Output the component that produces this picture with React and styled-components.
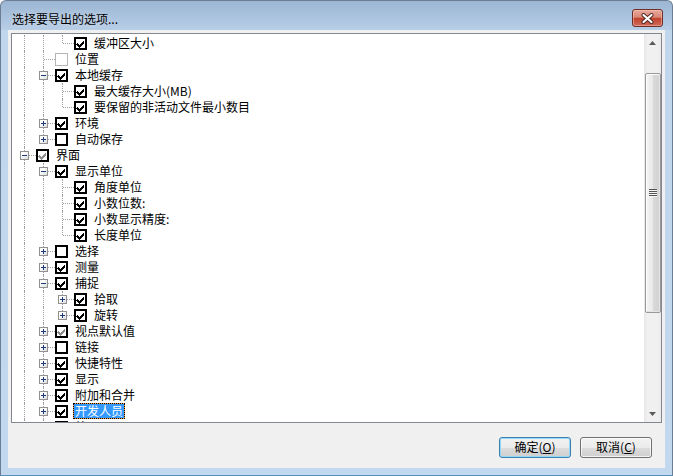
import styled, { createGlobalStyle } from "styled-components";

const GlobalStyle = createGlobalStyle`
  html, body {
    margin: 0;
    padding: 0;
    overflow: hidden;
    background: #fff;
  }
  body {
    font-family: "Noto Sans CJK SC", "Liberation Sans", sans-serif;
  }
`;

const FONT = `"Noto Sans CJK SC", "Liberation Sans", sans-serif`;
const LINE = "#a0a0a0";

const Window = styled.div`
  width: 673px;
  height: 476px;
  box-sizing: border-box;
  border: 1px solid #6a7d93;
  border-bottom-color: #4f93bd;
  border-radius: 6px 6px 0 0;
  background: linear-gradient(#9bb5d3 0, #b7cee7 29px, #bfd6ed 29px, #c2d8ee 100%);
  display: flex;
  flex-direction: column;
`;

const TitleBar = styled.div`
  height: 29px;
  flex: none;
  display: flex;
  align-items: flex-start;
  padding-left: 11px;
  padding-right: 9px;
`;

const Title = styled.div`
  flex: 1;
  font-family: ${FONT};
  font-size: 12px;
  line-height: 16px;
  margin-top: 10px;
  color: #000;
  text-shadow: 0 0 6px rgba(255, 255, 255, 0.6);
`;

const CloseButton = styled.div`
  width: 31px;
  height: 18px;
  margin-top: 8px;
  box-sizing: border-box;
  border: 1px solid #6e2d25;
  border-radius: 3px;
  background: linear-gradient(#e9aa9c 0%, #d98676 45%, #c2432e 52%, #cf6a57 100%);
  box-shadow: inset 0 0 0 1px rgba(255, 210, 200, 0.45);
  display: flex;
  align-items: center;
  justify-content: center;
`;

const Client = styled.div`
  flex: 1;
  margin: 0 7px 7px;
  background: #f0f0f0;
  padding: 3px 3px 0;
  display: flex;
  flex-direction: column;
`;

const Tree = styled.div`
  height: 390px;
  box-sizing: border-box;
  border: 1px solid #828790;
  background: #fff;
  display: flex;
  overflow: hidden;
`;

const TreeBody = styled.div`
  flex: 1;
  padding: 1px 0 0 3px;
  overflow: hidden;
`;

const Row = styled.div`
  height: 16px;
  display: flex;
  align-items: flex-start;
`;

const Guide = styled.div`
  width: 19px;
  height: 16px;
  flex: none;
  position: relative;
  &::before {
    content: "";
    display: ${p => (p.$line ? "block" : "none")};
    position: absolute;
    left: 9px;
    top: 0;
    height: 16px;
    border-left: 1px dotted ${LINE};
  }
`;

const Connector = styled.div`
  width: 19px;
  height: 16px;
  flex: none;
  position: relative;
  &::before {
    content: "";
    position: absolute;
    left: 9px;
    top: 0;
    height: ${p => (p.$last ? 8 : 16)}px;
    border-left: 1px dotted ${LINE};
  }
  &::after {
    content: "";
    position: absolute;
    left: 10px;
    top: 8px;
    width: 11px;
    border-top: 1px dotted ${LINE};
  }
`;

const Expander = styled.div`
  position: absolute;
  left: 5px;
  top: 4px;
  width: 9px;
  height: 9px;
  box-sizing: border-box;
  border: 1px solid #919191;
  background: linear-gradient(135deg, #ffffff 30%, #dcdcdc 100%);
  z-index: 1;
  &::before {
    content: "";
    position: absolute;
    left: 1px;
    top: 3px;
    width: 5px;
    height: 1px;
    background: #1f3a78;
  }
  &::after {
    content: "";
    display: ${p => (p.$open ? "none" : "block")};
    position: absolute;
    left: 3px;
    top: 1px;
    width: 1px;
    height: 5px;
    background: #1f3a78;
  }
`;

const CheckBox = styled.div`
  width: 13px;
  height: 13px;
  flex: none;
  box-sizing: border-box;
  margin: 2px 5px 0 2px;
  background: #fff;
  border: ${p => (p.$state === "disabled" ? "1px solid #b5b5b5" : "2px solid #000")};
  display: flex;
  align-items: center;
  justify-content: center;
`;

const Label = styled.div`
  height: 16px;
  box-sizing: border-box;
  padding: 0 1px;
  font-family: ${FONT};
  font-size: 12px;
  line-height: 14px;
  white-space: nowrap;
  color: ${p => (p.$selected ? "#fff" : "#000")};
  border: 1px ${p => (p.$selected ? "dotted #000" : "solid transparent")};
  background: ${p =>
    p.$selected ? "linear-gradient(#3399ff, #3399ff) padding-box, #f29a3c border-box" : "transparent"};
`;

const ScrollBar = styled.div`
  width: 17px;
  flex: none;
  display: flex;
  flex-direction: column;
  background: linear-gradient(to right, #e6e6e6, #f0f0f0 3px, #f0f0f0 14px, #eaeaea);
`;

const ArrowButton = styled.div`
  height: 17px;
  flex: none;
  display: flex;
  align-items: center;
  justify-content: center;
`;

const Track = styled.div`
  flex: 1;
  display: flex;
  flex-direction: column;
  align-items: center;
`;

const Thumb = styled.div`
  width: 16px;
  height: 240px;
  margin-top: 22px;
  box-sizing: border-box;
  border: 1px solid #989898;
  border-radius: 2px;
  background: linear-gradient(to right, #f4f4f4 0%, #e8e8e8 50%, #d9d9d9 50%, #d2d2d2 100%);
  box-shadow: inset 1px 1px 0 #fcfcfc, inset -1px -1px 0 #e4e4e4;
  display: flex;
  align-items: center;
  justify-content: center;
`;

const Grip = styled.div`
  width: 8px;
  height: 8px;
  background: repeating-linear-gradient(to bottom, #555 0 1px, #f5f5f5 1px 2px);
`;

const Footer = styled.div`
  display: flex;
  justify-content: flex-end;
  gap: 9px;
  padding: 14px 10px 0;
`;

const Button = styled.div`
  width: 72px;
  height: 21px;
  box-sizing: border-box;
  border: 1px solid ${p => (p.$default ? "#3c7fb1" : "#707070")};
  border-radius: 3px;
  background: linear-gradient(#f2f2f2 0%, #ebebeb 50%, #dddddd 50%, #cfcfcf 100%);
  box-shadow: inset 0 0 0 1px ${p => (p.$default ? "#96d8f7" : "rgba(255,255,255,0.75)")};
  font-family: ${FONT};
  font-size: 12px;
  line-height: 18px;
  color: #000;
  text-align: center;
  u {
    text-decoration: underline;
    text-underline-offset: 1px;
  }
`;

const rows = [
  { label: "缓冲区大小", guides: [1, 1], last: true, check: "on" },
  { label: "位置", guides: [1], check: "disabled" },
  { label: "本地缓存", guides: [1], toggle: "minus", check: "on" },
  { label: "最大缓存大小(MB)", guides: [1, 1], check: "on" },
  { label: "要保留的非活动文件最小数目", guides: [1, 1], last: true, check: "on" },
  { label: "环境", guides: [1], toggle: "plus", check: "on" },
  { label: "自动保存", guides: [1], last: true, toggle: "plus", check: "off" },
  { label: "界面", guides: [], toggle: "minus", check: "gray" },
  { label: "显示单位", guides: [1], toggle: "minus", check: "on" },
  { label: "角度单位", guides: [1, 1], check: "on" },
  { label: "小数位数:", guides: [1, 1], check: "on" },
  { label: "小数显示精度:", guides: [1, 1], check: "on" },
  { label: "长度单位", guides: [1, 1], last: true, check: "on" },
  { label: "选择", guides: [1], toggle: "plus", check: "off" },
  { label: "测量", guides: [1], toggle: "plus", check: "on" },
  { label: "捕捉", guides: [1], toggle: "minus", check: "on" },
  { label: "拾取", guides: [1, 1], toggle: "plus", check: "on" },
  { label: "旋转", guides: [1, 1], last: true, toggle: "plus", check: "on" },
  { label: "视点默认值", guides: [1], toggle: "plus", check: "gray" },
  { label: "链接", guides: [1], toggle: "plus", check: "off" },
  { label: "快捷特性", guides: [1], toggle: "plus", check: "on" },
  { label: "显示", guides: [1], toggle: "plus", check: "on" },
  { label: "附加和合并", guides: [1], toggle: "plus", check: "on" },
  { label: "开发人员", guides: [1], toggle: "plus", check: "on", selected: true },
  { label: "外观", guides: [1], toggle: "plus", check: "on" },
];

function CheckMark({ color }) {
  return (
    <svg width="9" height="9" viewBox="0 0 9 9" shapeRendering="crispEdges">
      <path d="M1 4h1v1h1v1h1v-1h1v-1h1v-1h1v-1h1v3h-1v1h-1v1h-1v1h-1v1h-1v-1h-1v-1h-1v-1h-1z" fill={color} />
    </svg>
  );
}

function TreeRow({ row }) {
  return (
    <Row>
      {row.guides.map((g, i) => (
        <Guide key={i} $line={g} />
      ))}
      <Connector $last={row.last}>
        {row.toggle && <Expander $open={row.toggle === "minus"} />}
      </Connector>
      <CheckBox $state={row.check}>
        {row.check === "on" && <CheckMark color="#000" />}
        {row.check === "gray" && <CheckMark color="#8d8d8d" />}
      </CheckBox>
      <Label $selected={row.selected}>{row.label}</Label>
    </Row>
  );
}

export default function App() {
  return (
    <>
      <GlobalStyle />
      <Window>
        <TitleBar>
          <Title>选择要导出的选项...</Title>
          <CloseButton>
            <svg width="13" height="11" viewBox="0 0 13 11">
              <path d="M2.5 2 L10.5 9 M10.5 2 L2.5 9" stroke="#4a2420" strokeWidth="4" strokeLinecap="round" />
              <path d="M2.5 2 L10.5 9 M10.5 2 L2.5 9" stroke="#fff" strokeWidth="2.2" strokeLinecap="round" />
            </svg>
          </CloseButton>
        </TitleBar>
        <Client>
          <Tree>
            <TreeBody>
              {rows.map((row, i) => (
                <TreeRow key={i} row={row} />
              ))}
            </TreeBody>
            <ScrollBar>
              <ArrowButton>
                <svg width="7" height="4" viewBox="0 0 7 4">
                  <path d="M3.5 0 L7 4 L0 4 Z" fill="#5a5a5a" />
                </svg>
              </ArrowButton>
              <Track>
                <Thumb>
                  <Grip />
                </Thumb>
              </Track>
              <ArrowButton>
                <svg width="7" height="4" viewBox="0 0 7 4">
                  <path d="M0 0 L7 0 L3.5 4 Z" fill="#5a5a5a" />
                </svg>
              </ArrowButton>
            </ScrollBar>
          </Tree>
          <Footer>
            <Button $default>
              确定(<u>O</u>)
            </Button>
            <Button>
              取消(<u>C</u>)
            </Button>
          </Footer>
        </Client>
      </Window>
    </>
  );
}
